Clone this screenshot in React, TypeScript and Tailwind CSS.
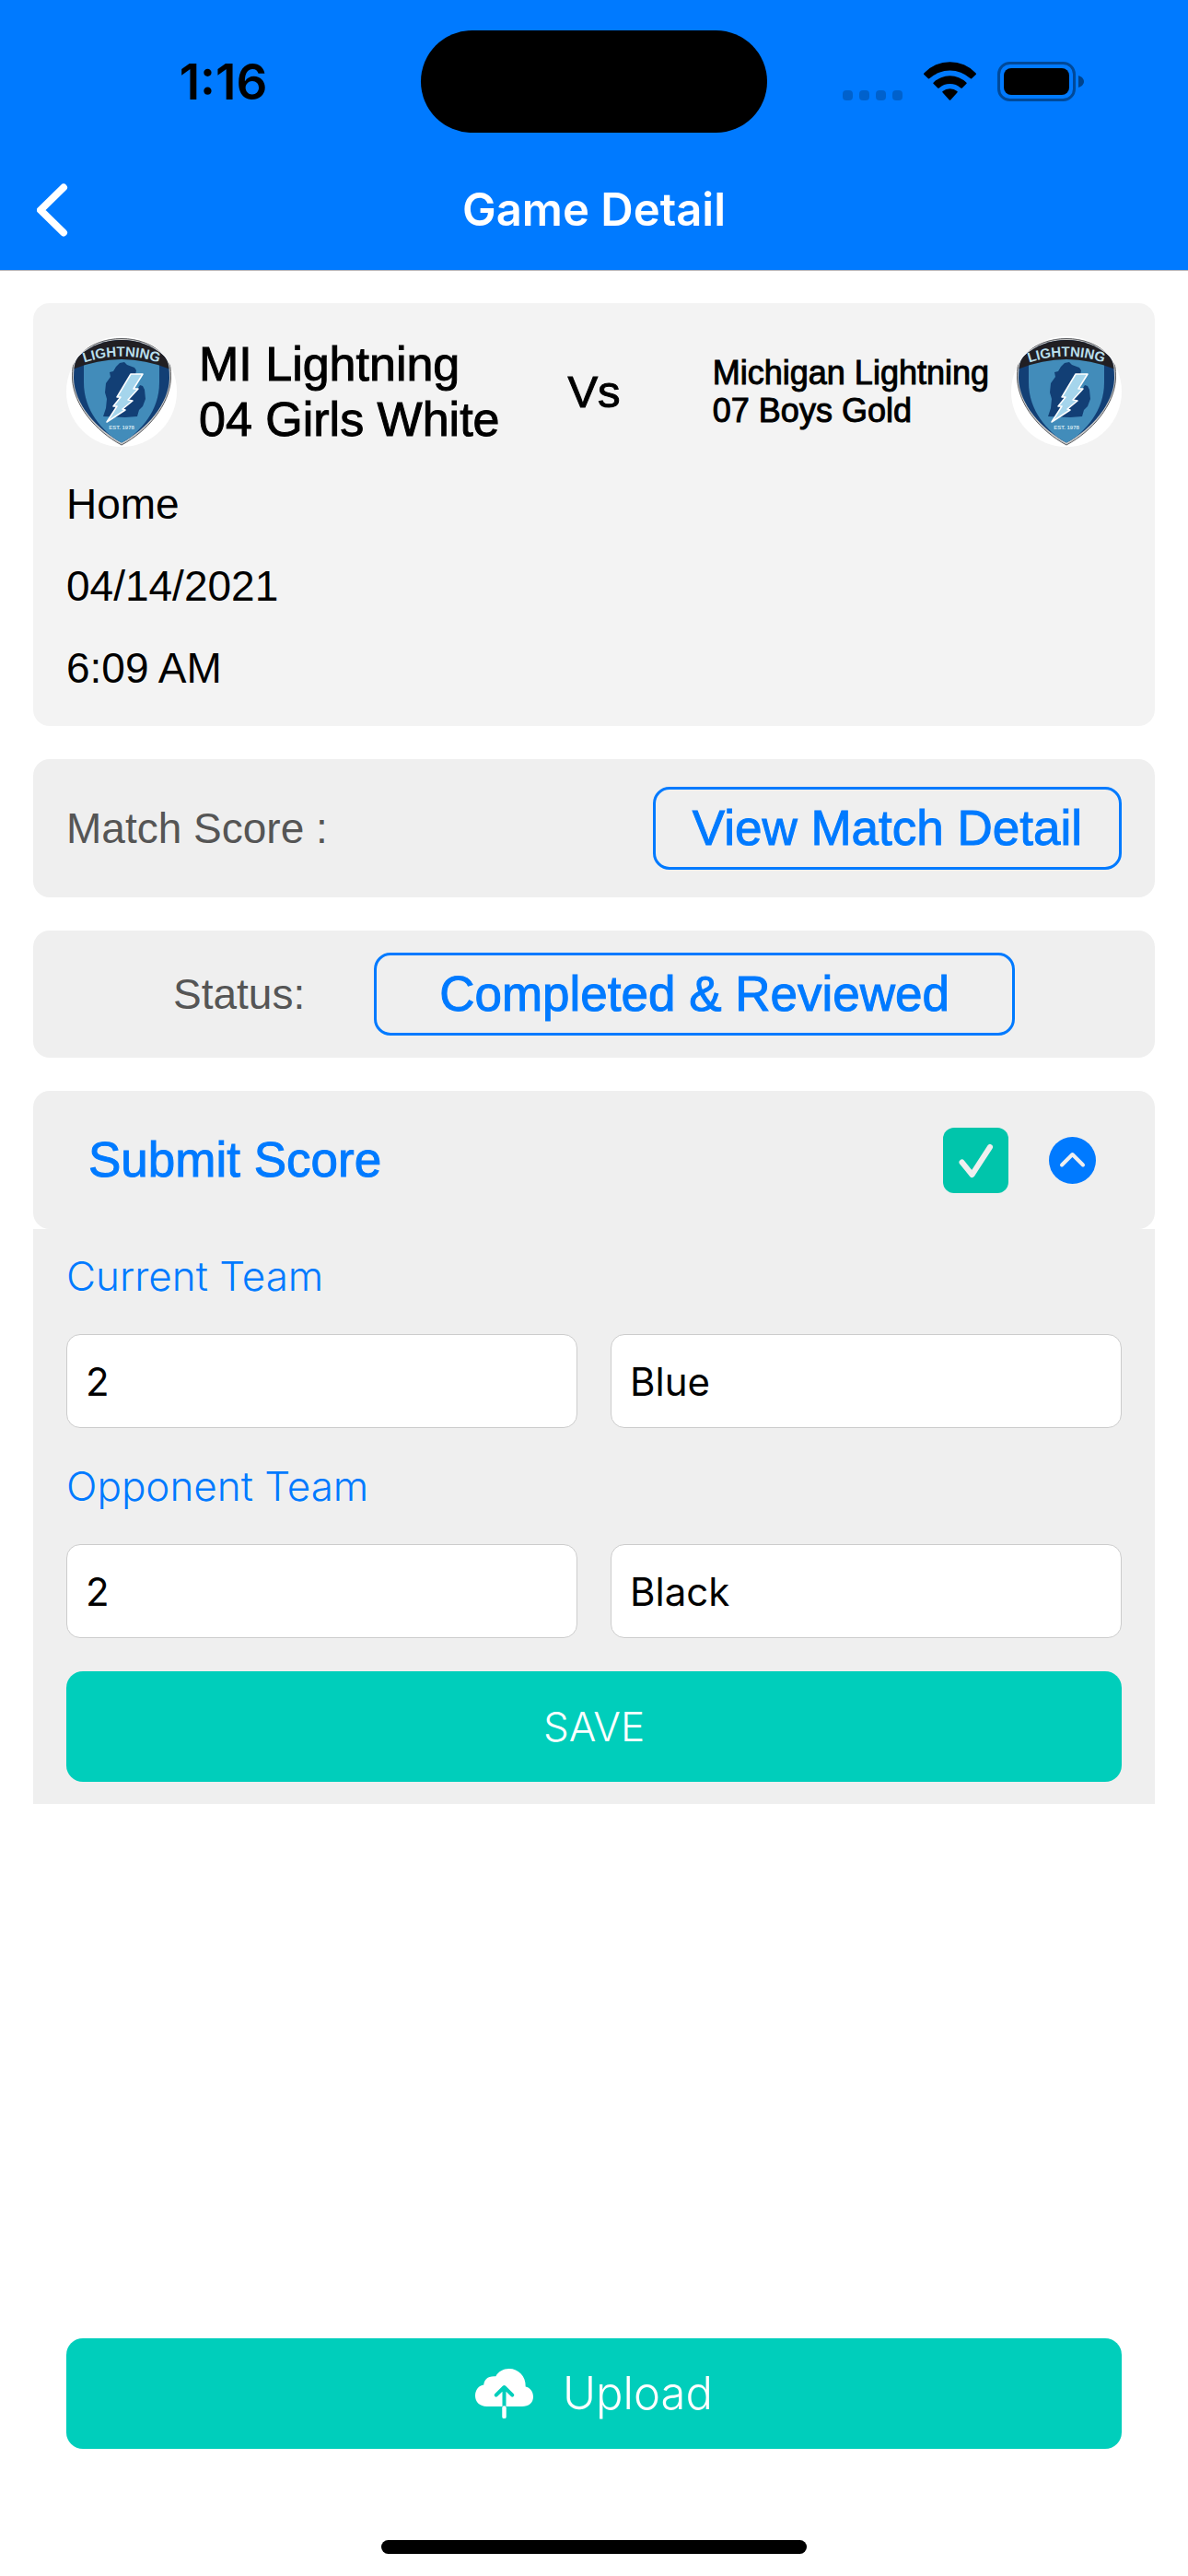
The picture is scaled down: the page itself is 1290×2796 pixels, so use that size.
import { useState } from 'react';

const BackIcon = () => (
  <svg className="w-[34px] h-[58px]" viewBox="0 0 34 58" fill="none" aria-hidden="true">
    <path d="M29 4.5L4 29l25 24.5" stroke="#fff" strokeWidth="8" strokeLinecap="round" strokeLinejoin="round" />
  </svg>
);

const SignalIcon = () => (
  <svg className="w-[65px] h-[43px]" viewBox="0 0 65 43" fillOpacity="0.2" aria-hidden="true">
    <rect x="0" y="31" width="11" height="11" rx="4" />
    <rect x="18" y="31" width="11" height="11" rx="4" />
    <rect x="36" y="31" width="11" height="11" rx="4" />
    <rect x="54" y="31" width="11" height="11" rx="4" />
  </svg>
);

const WifiIcon = () => (
  <svg className="w-[57px] h-[43px]" viewBox="0 0 57 43" aria-hidden="true">
    <path d="M0.5 12.3A38.5 38.5 0 0 1 56.5 12.3Q57.4 13.2 56.6 14L52.1 18.2Q51.3 18.8 50.5 18A32.6 32.6 0 0 0 6.5 18Q5.7 18.8 4.9 18.2L0.4 14Q-0.4 13.2 0.5 12.3Z" />
    <path d="M10.7 22.5A25.5 25.5 0 0 1 46.3 22.5Q47.1 23.3 46.3 24.1L41.8 28.4Q41 29.1 40.2 28.4A17.5 17.5 0 0 0 16.8 28.4Q16 29.1 15.2 28.4L10.7 24.1Q9.9 23.3 10.7 22.5Z" />
    <path d="M20.6 32A12.5 12.5 0 0 1 36.4 32Q37.2 32.8 36.4 33.6L29.2 41.5Q28.5 42.2 27.8 41.5L20.6 33.6Q19.8 32.8 20.6 32Z" />
  </svg>
);

const BatteryIcon = () => (
  <svg className="w-[94px] h-[43px]" viewBox="0 0 94 43" aria-hidden="true">
    <rect x="1.5" y="1.5" width="82" height="40" rx="12" fill="none" stroke="#000" strokeOpacity="0.4" strokeWidth="3" />
    <rect x="7" y="7" width="71" height="29" rx="8" />
    <path d="M88 15c3 1 6 3 6 6.5s-3 5.5-6 6.5z" fillOpacity="0.45" />
  </svg>
);

const CloudUploadIcon = () => (
  <svg className="w-[63px] h-[54px]" viewBox="0 0 63 54" fill="none" aria-hidden="true">
    <path
      d="M12.5 41C5 41 0 36 0 29.5C0 23 4 18.3 9.3 17.6C9.6 12 13.5 7.5 22.3 8.2C25.3 3 30.5 0 36.7 0C47 0 55 8 54.7 19.5C59.5 20.5 63 25 63 30.5C63 37 58 41 51 41Z"
      fill="#fff"
    />
    <path d="M31.5 20.5V41M22.7 28.7L31.5 20L40.3 28.7" stroke="#00cebb" strokeWidth="4" strokeLinecap="round" strokeLinejoin="round" />
    <path d="M31.5 42.5V52" stroke="#fff" strokeWidth="4.5" strokeLinecap="round" />
  </svg>
);

const TeamLogo = ({ id }: { id: string }) => (
  <svg className="w-[120px] h-[120px] shrink-0" viewBox="0 0 120 120" role="img" aria-label="Lightning crest">
    <defs>
      <clipPath id={`${id}-circle`}>
        <circle cx="60" cy="60" r="60" />
      </clipPath>
      <clipPath id={`${id}-shield`}>
        <path d="M60 4C44 4 28 9 13 22C9 28 8 35 8 46C9 74 33 101 60 115.5C87 101 111 74 112 46C112 35 111 28 107 22C92 9 76 4 60 4Z" />
      </clipPath>
      <path id={`${id}-arc`} d="M14 30.5Q60 13 106 30.5" />
    </defs>
    <circle cx="60" cy="60" r="60" fill="#fff" />
    <g clipPath={`url(#${id}-circle)`}>
      <path
        d="M60 2.5C43 2.5 26 8 11 22C7 28 6.5 35 6.5 46C8 75 32 103 60 118C88 103 112 75 113.5 46C113.5 35 113 28 109 22C94 8 77 2.5 60 2.5Z"
        fill="#c9c9c9"
        stroke="#5c5e62"
        strokeWidth="1"
      />
      <g clipPath={`url(#${id}-shield)`}>
        <rect width="120" height="120" fill="#123f75" />
        <path d="M19 20H101V50C101 82 80 103 60 117C40 103 19 82 19 50Z" fill="#428cba" />
        <path d="M0 0H120V39Q60 11 0 39Z" fill="#211f23" />
      </g>
      <path
        d="M58 29L63 28L66 31L74 34L76 37L75 42L76 47L73 55L76 59L80 53L83 54L85 58L86 68L83 76L79 80L77 87L64 88L40 87L43 78L44 68L42 61L43 51L48 44L47 39L51 38L54 33Z"
        fill="#123f75"
      />
      <path
        d="M70 41L83 41L73 57L78 57L67 69L72 70L61 79L64 80L44 93L55 76L51 76L59 66L55 66Z"
        fill="#a5d5ec"
        stroke="#fff"
        strokeWidth="1.5"
        strokeLinejoin="round"
      />
    </g>
    <text className="font-['Liberation_Sans',sans-serif] font-bold text-[15px]" fill="#b9deec" textAnchor="middle">
      <textPath href={`#${id}-arc`} startOffset="50%">
        LIGHTNING
      </textPath>
    </text>
    <text className="font-['Liberation_Sans',sans-serif] font-bold text-[6px]" x="60" y="101" fill="#cfe6f0" textAnchor="middle">
      EST. 1978
    </text>
  </svg>
);

interface TeamFieldsProps {
  id: string;
  title: string;
  score: string;
  color: string;
}

const inputClass =
  'w-full h-[102px] rounded-[15px] border border-[#cccccc] bg-white px-5 text-[42px] text-black outline-none';

const TeamFields = ({ id, title, score, color }: TeamFieldsProps) => (
  <div>
    <label htmlFor={`${id}-score`} className="block font-light text-[44px] leading-[54px] text-[#007aff]">
      {title}
    </label>

    <div className="grid grid-cols-2 gap-9 mt-9">
      <input id={`${id}-score`} className={inputClass} type="text" inputMode="numeric" defaultValue={score} />
      <input aria-label={`${title} color`} className={inputClass} type="text" defaultValue={color} />
    </div>
  </div>
);

const outlineButtonClass =
  'h-[90px] rounded-[18px] border-[3px] border-[#007aff] text-[53px] leading-[60px] text-[#007aff] whitespace-nowrap [-webkit-text-stroke:1px]';

export default function App() {
  const [submitted, setSubmitted] = useState(true);
  const [open, setOpen] = useState(true);

  return (
    <div className="min-h-screen flex flex-col bg-white text-black font-['Liberation_Sans',Arial,sans-serif]">
      <header className="bg-[#007aff] border-b border-[#b5b5ba] font-['Inter',sans-serif]">
        <div className="grid grid-cols-[1fr_376px_1fr] items-center h-[162px] pt-[15px]">
          <span className="pl-7 text-center font-semibold text-[53px] leading-[60px]">1:16</span>
          <div className="h-[111px] rounded-full bg-black" />
          <div className="flex items-center justify-center gap-[23px] pr-8">
            <SignalIcon />
            <WifiIcon />
            <BatteryIcon />
          </div>
        </div>

        <div className="grid grid-cols-[1fr_auto_1fr] items-center h-[131px] px-10">
          <button type="button" className="justify-self-start" aria-label="Back">
            <BackIcon />
          </button>
          <h1 className="font-semibold text-[49px] leading-[60px] text-white">Game Detail</h1>
        </div>
      </header>

      <main className="flex flex-col grow px-9 pt-[35px]">
        <section className="rounded-[18px] bg-[#f3f3f3] p-9">
          <div className="grid grid-cols-[1fr_auto_1fr] items-center">
            <div className="flex items-center gap-6">
              <TeamLogo id="home" />
              <p className="text-[52px] leading-[60px] whitespace-nowrap [-webkit-text-stroke:1px]">
                MI Lightning
                <br />
                04 Girls White
              </p>
            </div>
            <span className="text-[49px] leading-[60px] [-webkit-text-stroke:1px]">Vs</span>
            <div className="flex items-center justify-end gap-6">
              <p className="text-[36px] leading-[41px] whitespace-nowrap [-webkit-text-stroke:1px]">
                Michigan Lightning
                <br />
                07 Boys Gold
              </p>
              <TeamLogo id="away" />
            </div>
          </div>

          <p className="mt-9 text-[46px] leading-[53px]">Home</p>
          <p className="mt-9 text-[46px] leading-[53px]">04/14/2021</p>
          <p className="mt-9 text-[46px] leading-[53px]">6:09 AM</p>
        </section>

        <section className="mt-9 flex items-center justify-between h-[150px] rounded-[18px] bg-[#efefef] px-9">
          <span className="text-[46px] leading-[53px] text-[#555555]">Match Score :</span>
          <button type="button" className={`${outlineButtonClass} px-10`}>
            View Match Detail
          </button>
        </section>

        <section className="mt-9 flex items-center justify-center gap-[75px] h-[138px] rounded-[18px] bg-[#efefef]">
          <span className="text-[46px] leading-[53px] text-[#555555]">Status:</span>
          <button type="button" className={`${outlineButtonClass} px-[68px]`}>
            Completed & Reviewed
          </button>
        </section>

        <section className="mt-9">
          <div className="flex items-center h-[150px] rounded-[18px] bg-[#efefef] pl-[60px] pr-16">
            <label htmlFor="submit-score" className="grow text-[53px] leading-[60px] text-[#007aff] [-webkit-text-stroke:1px]">
              Submit Score
            </label>

            <span className="grid size-[71px]">
              <input
                id="submit-score"
                type="checkbox"
                className="col-start-1 row-start-1 size-full appearance-none rounded-[12px] bg-white checked:bg-[#00c5ab]"
                checked={submitted}
                onChange={(e) => setSubmitted(e.target.checked)}
              />
              <svg className="col-start-1 row-start-1 pointer-events-none" viewBox="0 0 71 71" fill="none" aria-hidden="true">
                <path d="M20.5 37.5L31.5 51L51 21" stroke="#efefef" strokeWidth="6" strokeLinecap="round" strokeLinejoin="round" />
              </svg>
            </span>

            <button
              type="button"
              className="ml-11"
              aria-label="Toggle score form"
              aria-expanded={open}
              onClick={() => setOpen(!open)}
            >
              <svg className="size-[51px]" viewBox="0 0 51 51" fill="none" aria-hidden="true">
                <circle cx="25.5" cy="25.5" r="25.5" fill="#007aff" />
                <path d="M14 30.5L25.5 19L37 30.5" stroke="#efefef" strokeWidth="4" strokeLinecap="round" strokeLinejoin="round" />
              </svg>
            </button>
          </div>

          {open && (
            <form
              className="flex flex-col gap-9 bg-[#efefef] px-9 py-6 font-['Inter',sans-serif]"
              onSubmit={(e) => e.preventDefault()}
            >
              <TeamFields id="current" title="Current Team" score="2" color="Blue" />
              <TeamFields id="opponent" title="Opponent Team" score="2" color="Black" />

              <button type="submit" className="h-[120px] rounded-[18px] bg-[#00cebb] font-[350] text-[44px] text-white">
                SAVE
              </button>
            </form>
          )}
        </section>

        <button
          type="button"
          className="mt-auto mx-9 flex items-center justify-center gap-8 h-[120px] rounded-[18px] bg-[#00cebb] font-['Inter',sans-serif] font-[350] text-[49px] text-white"
        >
          <CloudUploadIcon />
          Upload
        </button>
      </main>

      <footer className="flex justify-center pt-[99px] pb-6">
        <div className="w-[462px] h-[15px] rounded-full bg-black" />
      </footer>
    </div>
  );
}
